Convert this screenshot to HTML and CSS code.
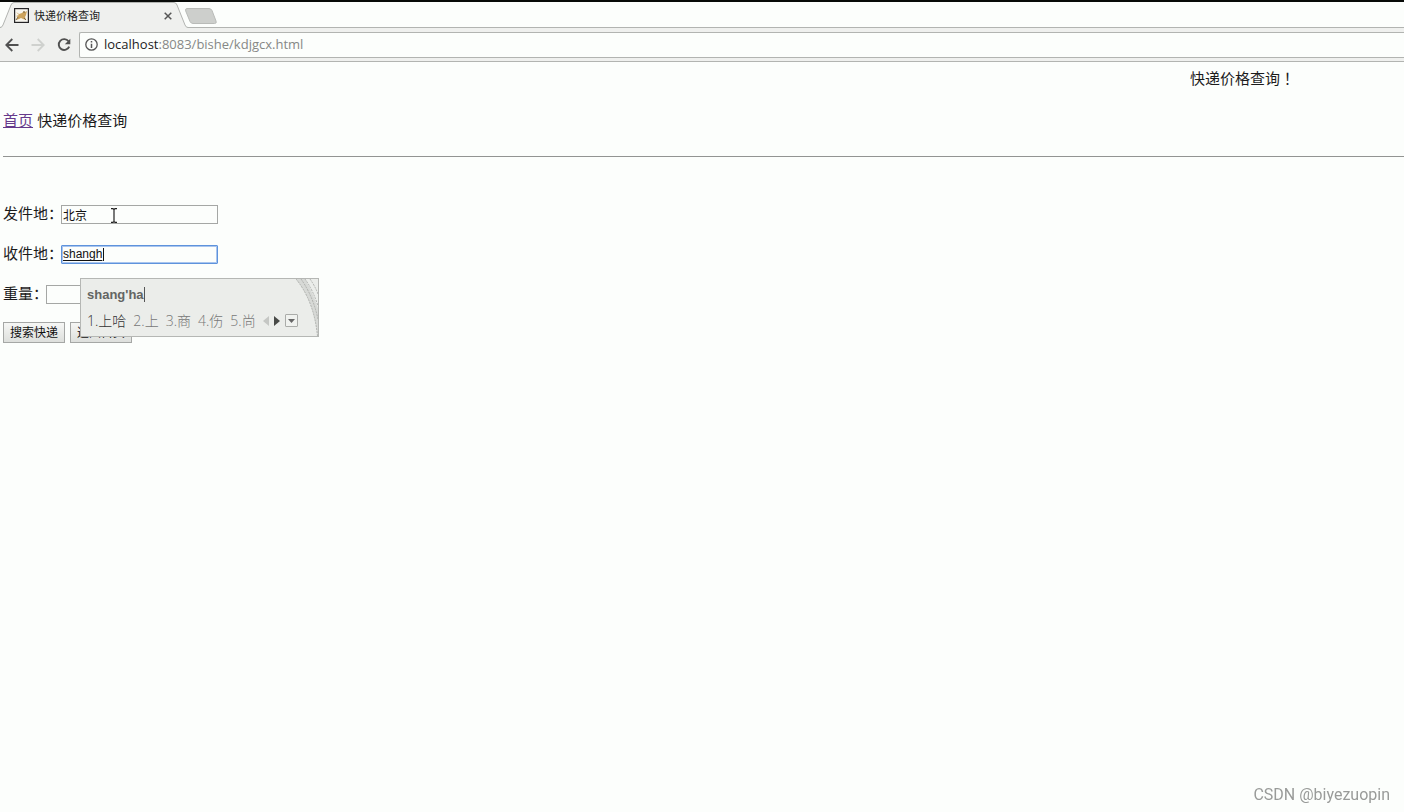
FILE: index.html
```html
<!DOCTYPE html>
<html lang="zh-CN">
<head>
  <meta charset="UTF-8">
  <meta name="viewport" content="width=device-width, initial-scale=1.0">
  <title>快递价格查询</title>
  <link rel="stylesheet" href="styles.css">
</head>
<body>
  <header class="browser">
    <div class="tab-strip">
      <svg class="tab-shape" width="188" height="26" viewBox="0 0 188 26" aria-hidden="true">
        <path d="M0 26 L1 25.5 Q2 25 3 23 L11 3 Q12 .5 14 .5 H174 Q176 .5 177 3 L185 23 Q186 25.500 188 25.500 V26Z" fill="#eff0ee"/>
        <path d="M0 25.500 Q2 25.500 3 23 L11 3 Q12 .5 14 .5 H174 Q176 .5 177 3 L185 23 Q186 25.500 188 25.500" fill="none" stroke="#b2b4b1"/>
      </svg>
      <div class="tab">
        <svg class="favicon" width="15" height="15" viewBox="0 0 15 15" aria-hidden="true">
          <rect x=".6" y=".6" width="13.800" height="13.800" fill="#f8f6ef" stroke="#252427" stroke-width="1.200"/>
          <path d="M2 4 L5 6 L8 5 L10 3 L11 4 L13 3 L12 7 L11 9 L12 12 L9 11 L7 10 L5 11 L2 12 L4 9 L2 8 L5 7Z" fill="#cda35c"/>
          <path d="M10 3 L10 5 M4 9 L2 12 M10 10 L12 12" stroke="#66553b" stroke-width=".8"/>
        </svg>
        <span class="tab-title">快递价格查询</span>
        <button class="tab-close" type="button" aria-label="关闭">
          <svg width="8" height="8" viewBox="0 0 8 8"><path d="M.7 .7 L7.300 7.300 M7.300 .7 L.7 7.300" stroke="#555" stroke-width="1.500"/></svg>
        </button>
      </div>
      <button class="new-tab" type="button" aria-label="新标签页">
        <svg width="32" height="16" viewBox="0 0 32 16"><path d="M2 .5 H24 Q26 .5 27 2.500 L31 13 Q32 15.500 29.500 15.500 H8 Q6 15.500 5 13.500 L.7 3 Q0 .5 2 .5Z" fill="#cdcfcc" stroke="#b9bbb8"/></svg>
      </button>
    </div>
    <div class="toolbar">
      <button class="nav-button" type="button" aria-label="后退">
        <svg width="14" height="14" viewBox="0 0 14 14" fill="none" stroke="#505050" stroke-width="1.800"><path d="M13.500 7 H1.500 M7.300 1 L1.300 7 L7.300 13"/></svg>
      </button>
      <button class="nav-button" type="button" aria-label="前进">
        <svg width="14" height="14" viewBox="0 0 14 14" fill="none" stroke="#cfd1ce" stroke-width="1.800"><path d="M.5 7 H12.500 M6.700 1 L12.700 7 L6.700 13"/></svg>
      </button>
      <button class="nav-button" type="button" aria-label="刷新">
        <svg width="14" height="14" viewBox="0 0 14 14"><path d="M11.500 3.300 A5.400 5.400 0 1 0 12.200 8.600" fill="none" stroke="#505050" stroke-width="1.900"/><path d="M13.300 .8 V6.200 H7.800Z" fill="#505050"/></svg>
      </button>
      <div class="address">
        <svg width="13" height="13" viewBox="0 0 13 13" aria-hidden="true"><circle cx="6.500" cy="6.500" r="5.700" fill="none" stroke="#555" stroke-width="1.300"/><path d="M6.500 5.800 V10 M6.500 3 V4.500" stroke="#555" stroke-width="1.500"/></svg>
        <span class="url"><span class="host">localhost</span>:8083/bishe/kdjgcx.html</span>
      </div>
    </div>
  </header>
  <main>
    <div class="notice">快递价格查询<span class="mark" lang="zh-TW">！</span></div>
    <nav class="crumbs"><a href="#">首页</a> 快递价格查询</nav>
    <hr>
    <form>
      <div class="row">
        <label for="from">发件地：</label>
        <div class="field">
          <input type="text" id="from" value="北京">
          <svg class="pointer" width="8" height="15" viewBox="0 0 8 15" aria-hidden="true"><path d="M1 .7 H3 L4 1.500 L5 .7 H7 M4 1.500 V13.500 M1 14.300 H3 L4 13.500 L5 14.300 H7" fill="none" stroke="#222" stroke-width="1.200"/></svg>
        </div>
      </div>
      <div class="row">
        <label for="to">收件地：</label>
        <div class="field">
          <input class="active" type="text" id="to" value="shangh">
          <span class="caret"></span>
          <div class="ime">
            <svg class="ime-art" width="22" height="57" viewBox="0 0 22 57" aria-hidden="true">
              <path d="M0 0 Q18 22 21.500 57 H22 V29 Q16 12 9 0Z" fill="#d7d9d6"/>
              <path d="M0 0 Q18 22 21.500 57 M5 0 Q17 17 22 40 M9 0 Q17 11 22 27 M14 0 Q19 7 22 15" fill="none" stroke="#a2a5a1" stroke-width=".8" stroke-dasharray="2 1"/>
            </svg>
            <div class="ime-typed">shang'ha</div>
            <div class="ime-list">
              <span class="first">1.上哈</span>
              <span>2.上</span>
              <span>3.商</span>
              <span>4.伤</span>
              <span>5.尚</span>
              <svg class="ime-arrows" width="17" height="10" viewBox="0 0 17 10" aria-hidden="true"><path d="M6 0 V10 L0 5Z" fill="#c5c7c4"/><path d="M11 0 V10 L17 5Z" fill="#484a47"/></svg>
              <button class="ime-more" type="button" aria-label="更多">
                <svg width="7" height="4" viewBox="0 0 7 4"><path d="M0 0 H7 L3.500 4Z" fill="#666"/></svg>
              </button>
            </div>
          </div>
        </div>
      </div>
      <div class="row">
        <label for="weight">重量：</label>
        <div class="field"><input type="text" id="weight"></div>
      </div>
      <div class="buttons">
        <button type="submit">搜索快递</button>
        <button type="button">返回首页</button>
      </div>
    </form>
  </main>
  <div class="watermark">CSDN @biyezuopin</div>
</body>
</html>
```

FILE: styles.css
```css
body {
  margin: 0;
  background: #fcfefc;
  color: #1c1c1c;
  font-family: "Liberation Sans", "Noto Sans CJK SC", sans-serif;
  font-size: 15px;
  line-height: 20px;
  overflow-x: hidden;
}
button {
  font-family: inherit;
  cursor: pointer;
}

/* browser window */
.browser button {
  display: flex;
  padding: 0;
  border: none;
  background: none;
}
.tab-strip {
  display: flex;
  position: relative;
  height: 25px;
  border-top: 2px solid #080a08;
  border-bottom: 1px solid #b2b4b1;
}
.tab-shape {
  position: absolute;
  left: 0;
  top: 0;
}
.tab {
  display: flex;
  position: relative;
  align-items: center;
  width: 158px;
  padding: 2px 13px 0 14px;
}
.tab-title {
  margin-left: 5px;
  font-size: 11px;
}
.tab-close {
  margin-left: auto;
}
.browser .new-tab {
  padding-top: 6px;
}
.toolbar {
  display: flex;
  align-items: center;
  gap: 12px;
  padding: 4px 0 3px 5px;
  background: #eff0ee;
  border-bottom: 1px solid #b2b4b1;
}
.toolbar .nav-button + .address {
  margin-left: -4px;
}
.address {
  display: flex;
  flex: 1;
  align-items: center;
  gap: 6px;
  height: 22px;
  padding: 0 0 2px 5px;
  border: 1px solid #b2b4b1;
  border-right: none;
  border-radius: 2px 0 0 2px;
  background: #fcfefc;
}
.url {
  color: #868886;
  font-family: "Open Sans", sans-serif;
  font-size: 13px;
}
.host {
  color: #1c1c1c;
}

/* page */
main {
  padding: 7px 0 0 3px;
}
.notice {
  width: 214px;
  height: 20px;
  margin-left: auto;
}
.notice .mark {
  font-family: "Noto Sans CJK TC", sans-serif;
  line-height: 1;
}
.crumbs {
  margin-top: 22px;
}
.crumbs a {
  color: #663a8b;
}
hr {
  margin: 25px 0 47px;
  border: none;
  border-top: 1px solid #929492;
}
.row {
  display: flex;
  align-items: center;
  height: 20px;
  margin-bottom: 20px;
}
.field {
  position: relative;
  margin-left: -2px;
}
.field input {
  display: block;
  box-sizing: border-box;
  width: 157px;
  height: 19px;
  padding: 1px;
  border: 1px solid #a5a7a5;
  background: #fcfefc;
  color: #111;
  font-family: inherit;
  font-size: 12px;
}
.field .active {
  border-color: #5e93dc;
  border-radius: 1px;
  outline: 1px solid #a9c5ee;
  outline-offset: -2px;
  text-decoration: underline;
  text-underline-offset: 2px;
}
.caret {
  position: absolute;
  top: 3px;
  left: 42px;
  height: 13px;
  border-left: 1px solid #111;
}
.pointer {
  position: absolute;
  top: 3px;
  left: 49px;
}
.buttons {
  display: flex;
  gap: 5px;
  margin-top: -2px;
}
.buttons button {
  height: 21px;
  padding: 0 6px;
  border: 1px solid #a5a7a5;
  background: linear-gradient(#f6f7f5, #dddfdc);
  color: #111;
  font-size: 12px;
  line-height: 18px;
}

/* input method popup */
.ime {
  position: absolute;
  z-index: 1;
  top: 33px;
  left: 19px;
  box-sizing: border-box;
  width: 239px;
  height: 59px;
  padding: 8px 6px 6px;
  border: 1px solid #b5b7b4;
  background: #ebedea;
  color: #777;
}
.ime-art {
  position: absolute;
  top: 0;
  right: 0;
}
.ime-typed {
  width: max-content;
  height: 15px;
  border-right: 1px solid #555;
  color: #636563;
  font-size: 13px;
  font-weight: bold;
  line-height: 16px;
}
.ime-list {
  display: flex;
  align-items: center;
  gap: 7px;
  margin-top: 10px;
  font-family: "Open Sans", "Noto Sans CJK SC", sans-serif;
  font-size: 14px;
  font-weight: 300;
  line-height: 18px;
  white-space: nowrap;
}
.ime-list .first {
  color: #333;
}
.ime-more {
  display: flex;
  align-items: center;
  justify-content: center;
  width: 13px;
  height: 13px;
  margin-left: -2px;
  padding: 0;
  border: 1px solid #aaaca9;
  border-radius: 1px;
  background: #f0f2ef;
}
.watermark {
  position: fixed;
  right: 14px;
  bottom: 7px;
  color: #999b99;
  font-family: Roboto, sans-serif;
  font-size: 16px;
}
```
